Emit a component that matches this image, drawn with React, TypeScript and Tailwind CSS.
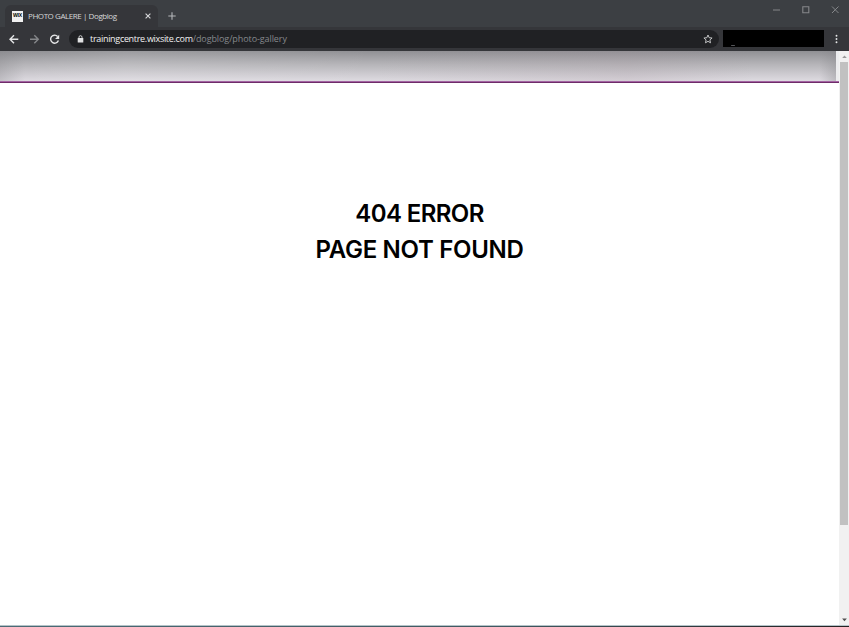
import React from "react";

function TabStrip() {
  return (
    <div className="flex h-[27px] items-end bg-[#3c3f43] pl-[5px]">
      <div className="flex h-[22px] w-[153px] items-center rounded-t-[6px] bg-[#35363a] pl-[7px] pr-[6px]">
        <div className="flex h-[11px] w-[11px] items-center justify-center overflow-hidden bg-[#f2f2f2] font-['Liberation_Sans',sans-serif] text-[5px] font-bold tracking-[-0.1px] text-black">
          WIX
        </div>
        <span className="ml-[5px] whitespace-nowrap font-['Open_Sans',sans-serif] text-[8px] leading-[12px] tracking-[-0.43px] text-[#d5d6d8]">
          PHOTO GALERE | Dogblog
        </span>
        <svg className="ml-auto h-2 w-2" viewBox="0 0 8 8" stroke="#d8d9db" strokeWidth="1.1">
          <path d="M1.6 1.6 6.4 6.4M6.4 1.6 1.6 6.4" />
        </svg>
      </div>
      <svg className="mb-[6px] ml-[9px] h-[10px] w-[10px]" viewBox="0 0 10 10" stroke="#b5b7ba" strokeWidth="1.1">
        <path d="M5 1.3V8.7M1.3 5H8.7" />
      </svg>
      <svg className="ml-auto h-[27px] w-[80px]" viewBox="0 0 80 27" fill="none" stroke="#85878a" strokeWidth="1">
        <path d="M4 10H11" />
        <path d="M33.8 6.8H39.8V12.8H33.8Z" strokeWidth="1.1" />
        <path d="M63 6.5 69.5 13M69.5 6.5 63 13" />
      </svg>
    </div>
  );
}

function Toolbar() {
  return (
    <div className="flex h-6 items-start bg-[#35363a]">
      <svg className="h-6 w-[69px] shrink-0" viewBox="0 0 69 24" fill="none" strokeWidth="1.4">
        <path d="M18.3 12.3H10M14 8.3 10 12.3 14 16.3" stroke="#e6e7e8" />
        <path d="M30 12.3H38.3M34.3 8.3 38.3 12.3 34.3 16.3" stroke="#85878a" />
        <path d="M57.6 9.5A4 4 0 1 0 58.4 13.5" stroke="#e6e7e8" />
        <path d="M59.2 7.8V11.9H55.1Z" fill="#e6e7e8" />
      </svg>
      <div className="mt-[3px] flex h-[18px] w-[650px] items-center rounded-full bg-[#202124] pl-[8px] pr-[6px]">
        <svg className="h-2 w-[7px]" viewBox="0 0 7 8">
          <rect x="0.7" y="3" width="5.6" height="4.6" rx="0.5" fill="#e1e2e3" />
          <path d="M2 3.4V2.2A1.5 1.5 0 0 1 5 2.2V3.4" fill="none" stroke="#e1e2e3" strokeWidth="0.9" />
        </svg>
        <span className="ml-[6px] whitespace-nowrap font-['Open_Sans',sans-serif] text-[9px] leading-[14px] tracking-[-0.09px] text-[#85888c]">
          <span className="tracking-[-0.31px] text-[#f1f1f1]">trainingcentre.wixsite.com</span>/dogblog/photo-gallery
        </span>
        <svg className="ml-auto h-[10px] w-[10px]" viewBox="0 0 10 10" fill="none" stroke="#d0d1d3" strokeWidth="0.9">
          <path d="M5 1 6.15 3.7 9.1 4 6.9 5.9 7.5 8.8 5 7.3 2.5 8.8 3.1 5.9 0.9 4 3.85 3.7Z" />
        </svg>
      </div>
      <div className="ml-1 mt-[2.5px] h-[17px] w-[101px] bg-black">
        <div className="ml-2 mt-[15px] h-px w-1 rounded-full bg-[#55565a]" />
      </div>
      <svg className="ml-auto mr-[11px] mt-[7px] h-[10px] w-[3px]" viewBox="0 0 3 10" fill="#e6e7e8">
        <circle cx="1.5" cy="1.8" r="0.95" />
        <circle cx="1.5" cy="5" r="0.95" />
        <circle cx="1.5" cy="8.2" r="0.95" />
      </svg>
    </div>
  );
}

function Scrollbar() {
  return (
    <div className="flex w-[10px] shrink-0 flex-col bg-[#f1f1f1] pl-px">
      <svg className="h-[11px] w-[9px]" viewBox="0 0 9 11">
        <path d="M2.2 7 4.5 4.4 6.8 7Z" fill="#999" />
      </svg>
      <div className="h-[463px] w-[8px] bg-[#c1c1c1]" />
      <svg className="mt-auto h-[11px] w-[9px]" viewBox="0 0 9 11">
        <path d="M2.1 4.5 4.5 7.2 6.9 4.5Z" fill="#505050" />
      </svg>
    </div>
  );
}

export default function App() {
  return (
    <div className="flex h-[627px] w-[849px] flex-col overflow-hidden bg-white">
      <TabStrip />
      <Toolbar />
      <div className="flex min-h-0 flex-1">
        <main className="flex min-w-0 flex-1 flex-col">
          <div className="flex h-[30px] bg-[linear-gradient(to_bottom,#909094,#b6b5b9_45%,#dedbe1)]">
            <div className="flex-1 bg-[linear-gradient(to_right,rgba(130,130,134,0.3),transparent_3%,rgba(255,255,255,0.1)_15%,transparent_45%,rgba(165,145,155,0.18)_75%,transparent_90%,transparent_98%,rgba(130,130,134,0.35))]" />
            <div className="w-[3px] bg-[#ececee]" />
          </div>
          <div className="h-[2px] border-t border-[#a464a3] bg-[#6e2c69]" />
          <h1 className="mt-[113px] text-center font-['Inter',sans-serif] text-[24px] font-semibold leading-[36px] tracking-[-0.3px] text-black">
            <span className="block tracking-[-0.6px]">404 ERROR</span>
            <span className="block">PAGE NOT FOUND</span>
          </h1>
        </main>
        <Scrollbar />
      </div>
      <div className="h-[2px] border-t border-[#b4c3c8] bg-[linear-gradient(to_right,#4c6b76,#405860_60%,#242021)]" />
    </div>
  );
}
